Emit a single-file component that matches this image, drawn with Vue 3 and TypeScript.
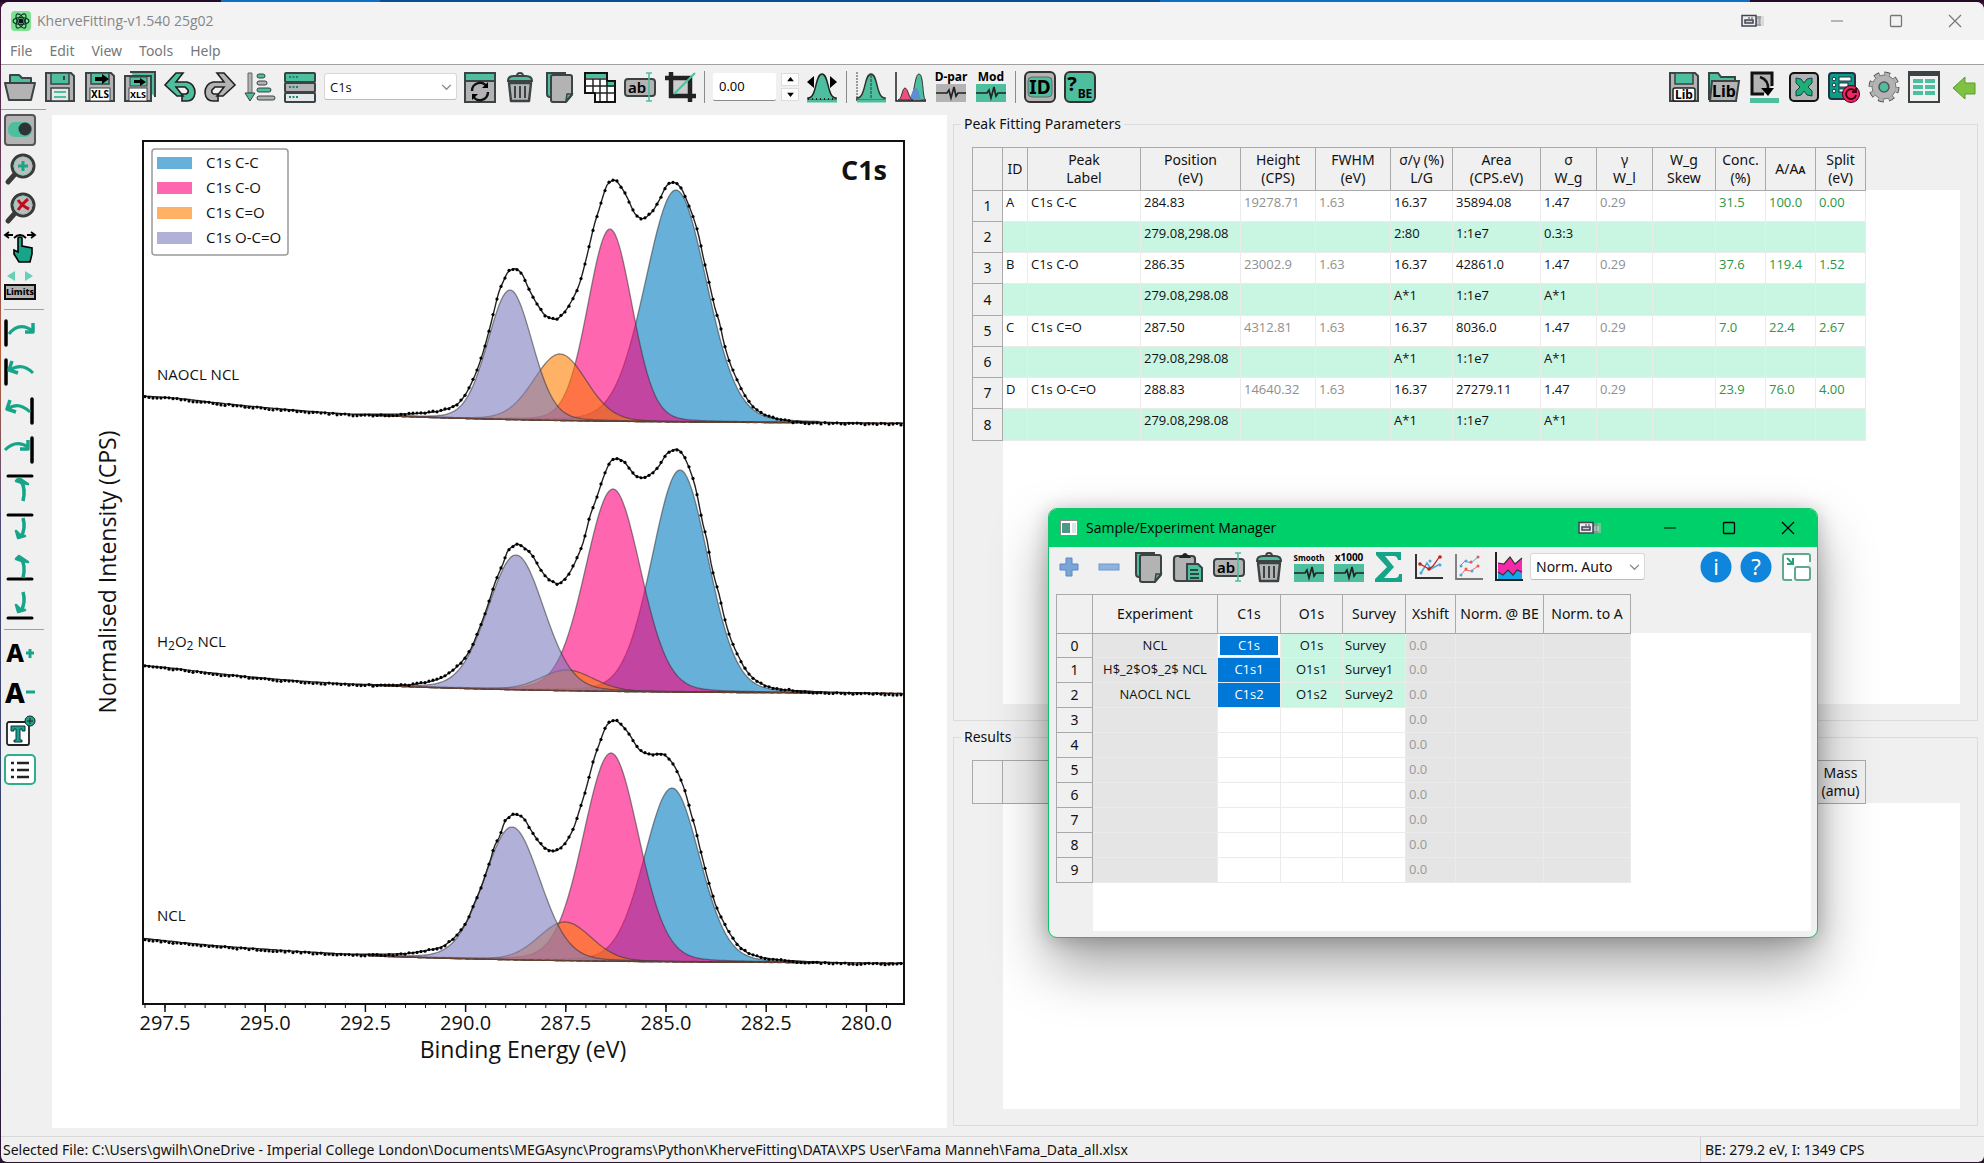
<script setup lang="ts">
import { ref } from 'vue'

type Pt = [number, number]

const menus = ['File', 'Edit', 'View', 'Tools', 'Help']
const coreLevel = ref('C1s')
const normMode = ref('Norm. Auto')
const shift = ref('0.00')

const G = '#4dbf9f'
const K = '#3b4345'
const S = '#b3b3b3'
const T = '#17a589'

const floppy = `<path d="M2 2h25l3 3v25H2z" fill="${S}" stroke="${K}" stroke-width="2"/><rect x="7" y="2" width="18" height="11" fill="${G}" stroke="${K}" stroke-width="1.5"/>`
const xls = `<rect x="6" y="17" width="20" height="13" fill="#fff" stroke="${K}"/><text x="16" y="27" font-size="10" font-weight="700" text-anchor="middle" font-family="Noto Sans,sans-serif">XLS</text>`
const blackArrow = '<path d="M11 6h7V3l7 5-7 5v-3h-7z" fill="#000"/>'
const pages = `<path d="M3 2h18v24H6q-3 0-3-3z" fill="${G}" stroke="${K}" stroke-width="2"/><path d="M9 4h17q2 0 2 2v18l-6 7H9q-2 0-2-2V6q0-2 2-2z" fill="${S}" stroke="${K}" stroke-width="2"/><path d="M28 23h-5l-1 7z" fill="${G}" stroke="${K}" stroke-width="1.5"/>`
const rename = `<rect x="1" y="8" width="30" height="17" rx="3" fill="${S}" stroke="${K}" stroke-width="2"/><text x="13" y="22" font-size="15" font-weight="600" text-anchor="middle" font-family="Noto Sans,sans-serif">ab</text><path d="M22 2h6M22 30h6M25 2v28" stroke="${G}" stroke-width="1.6" fill="none"/>`
const trash = `<path d="M5 12h22l-2 18H7z" fill="${S}" stroke="${K}" stroke-width="2.400" stroke-linejoin="round"/><path d="M11 15v12M16 15v12M21 15v12" stroke="${K}" stroke-width="2"/><path d="M4 10q0-5 6-5h12q6 0 6 5z" fill="${G}" stroke="${K}" stroke-width="2"/><path d="M13 5q0-3 3-3t3 3" fill="none" stroke="${K}" stroke-width="2"/>`
const bell = 'M2 27c9 0 7-24 14-24s5 24 14 24v2H2z'
const pulse = (label: string, fill: string, size: number) =>
  `<text x="16" y="10" font-size="${size}" font-weight="700" text-anchor="middle" font-family="Noto Sans,sans-serif">${label}</text><rect x="1" y="13" width="30" height="18" fill="${fill}"/><path d="M1 22h11l2-3 2 8 3-11 2 9 2-3h8" fill="none" stroke="#222" stroke-width="1.700"/>`
const lens = (mark: string) =>
  `<path d="M12 20l-8 9" stroke="#3a3a3a" stroke-width="5" stroke-linecap="round"/><circle cx="19" cy="13" r="11" fill="#bdbdbd" stroke="#3a3a3a" stroke-width="3"/><circle cx="19" cy="13" r="9" fill="none" stroke="#87c8b2" stroke-width="1"/>${mark}`
const sideArrow = (bar: number, tail: string, head: string) =>
  `<path d="M${bar} 4v24" stroke="#000" stroke-width="3.500" stroke-linecap="round"/><path d="${tail}" fill="none" stroke="${T}" stroke-width="3"/><path d="${head}" fill="none" stroke="${T}" stroke-width="3.500" stroke-linejoin="round"/>`
const upArrow = (bar: number, tail: string, head: string) =>
  `<path d="M4 ${bar}h24" stroke="#000" stroke-width="3" stroke-linecap="round"/><path d="${tail}" fill="none" stroke="${T}" stroke-width="3.500"/><path d="${head}" fill="${T}" stroke="${T}" stroke-width="2.500" stroke-linejoin="round"/>`
const roundBlue = (ch: string) =>
  `<circle cx="16" cy="16" r="15.500" fill="#0f86dc"/><text x="16" y="24" font-size="22" text-anchor="middle" fill="#fff" font-family="Noto Sans,sans-serif">${ch}</text>`

const icons: Record<string, string> = {
  open: `<path d="M6 12V4h9l3 3h9v6z" fill="${G}" stroke="${K}" stroke-width="2" stroke-linejoin="round"/><path d="M1 12h30l-4 17H5z" fill="${S}" stroke="${K}" stroke-width="2" stroke-linejoin="round"/>`,
  save: `${floppy}<rect x="7" y="17" width="18" height="13" fill="#e8e8e8" stroke="${K}" stroke-width="1.500"/><path d="M10 21h12M10 26h12" stroke="${G}" stroke-width="2"/><path d="M20 5v4" stroke="${K}" stroke-width="2"/>`,
  saveXls: `${floppy}${blackArrow}${xls}`,
  saveAll: `<path d="M6 1h25v25" fill="${G}" stroke="${K}" stroke-width="2"/><path d="M1 5h26v25H1z" fill="${S}" stroke="${K}" stroke-width="2"/><rect x="6" y="6" width="17" height="9" fill="${G}" stroke="${K}"/><path d="M10 9h6V7l6 4-6 4v-3h-6z"/><rect x="5" y="17" width="18" height="13" fill="#fff" stroke="${K}"/><text x="14" y="27" font-size="9" font-weight="700" text-anchor="middle" font-family="Noto Sans,sans-serif">XLS</text>`,
  undo: `<path d="M12 2h7l-7 9h11q8 2 8 11-1 8-8 8h-5v-7h4q3-1 2-4l-3-3H12l7 9h-6L1 14z" fill="${G}" stroke="#222" stroke-width="1.600"/>`,
  redo: `<path d="M20 2h-7l7 9H9q-8 2-8 11 1 8 8 8h5v-7h-4q-3-1-2-4l3-3h9l-7 9h6l12-11z" fill="${S}" stroke="#222" stroke-width="1.600"/>`,
  sort: `<path d="M4 2h4v20H4z" fill="${S}" stroke="#666"/><path d="M1 22h10l-5 8z" fill="${G}" stroke="${K}"/><rect x="13" y="3" width="8" height="4" rx="2" fill="${G}" stroke="${K}"/><rect x="13" y="10" width="10" height="4" rx="2" fill="${S}" stroke="${K}"/><rect x="13" y="17" width="14" height="4" rx="2" fill="${G}" stroke="${K}"/><rect x="13" y="25" width="18" height="4" rx="2" fill="${S}" stroke="${K}"/>`,
  rows: `<rect x="1" y="2" width="30" height="9" rx="1" fill="${G}" stroke="${K}" stroke-width="2"/><rect x="1" y="12" width="30" height="9" rx="1" fill="${S}" stroke="${K}" stroke-width="2"/><rect x="1" y="22" width="30" height="9" rx="1" fill="#e5e9ec" stroke="${K}" stroke-width="2"/><path d="M5 6h9M5 16h9M5 26h9" stroke="#178a72" stroke-width="2" stroke-dasharray="2 1.500"/>`,
  refresh: `<rect x="1" y="2" width="30" height="29" fill="${S}" stroke="${K}" stroke-width="2"/><rect x="2" y="3" width="28" height="6" fill="${G}"/><path d="M1 10h30" stroke="${K}" stroke-width="2"/><path d="M8 20a8 8 0 0 1 15-4M24 21a8 8 0 0 1-15 4" fill="none" stroke="#111" stroke-width="2.500"/><path d="M24 11v6h-6zM8 29v-6h6z"/>`,
  trash, pages, rename,
  grid: `<path d="M1 2h22v8h8v21H11V22H1z" fill="#fff" stroke="#111" stroke-width="2"/><path d="M2 3h20v4H2zM22 11h8v5h-8z" fill="${G}"/><path d="M1 8h22M1 15h30M9 8v14M16 8v22M23 10v20M11 22h20" stroke="#222" stroke-width="1.500"/>`,
  crop: `<rect x="9" y="8" width="16" height="16" fill="#ccc"/><path d="M1 7h25v24M7 1v24h25" fill="none" stroke="#222" stroke-width="4.500"/><path d="M10 23L31 2" stroke="${G}" stroke-width="2"/>`,
  shift: `<path d="${bell}" fill="${G}" stroke="#222" stroke-width="1.500"/><path d="M1 11l7-6v12zM31 11l-7-6v12z"/><path d="M1 30h30" stroke="${G}" stroke-width="3"/><path d="M2 28h28" stroke="#222" stroke-dasharray="1 3" stroke-width="2"/>`,
  peak: `<path d="M2 1v29h29" fill="none" stroke="#444" stroke-dasharray="2 1"/><path d="${bell}" fill="${G}" stroke="#333" stroke-width="1.500"/><path d="M16 4v24" stroke="#333" stroke-dasharray="3 1"/><path d="M2 30h29" stroke="${G}" stroke-width="3"/>`,
  peaks: `<path d="M13 29c7 0 6-26 11-26s3 26 7 26z" fill="${G}" stroke="#333"/><path d="M12 29c4 0 5-12 9-12s3 12 6 12z" fill="#5b8fd0"/><path d="M3 29c4 0 4-12 7-12s4 12 8 12z" fill="#ee4f7d" stroke="#333"/><path d="M1 1v29h30" fill="none" stroke="#222" stroke-width="1.500"/>`,
  dpar: pulse('D-par', S, 12),
  mod: pulse('Mod', G, 12),
  id: `<rect x="1" y="1" width="30" height="30" rx="5" fill="${S}" stroke="#333" stroke-width="2"/><rect x="4" y="6" width="24" height="20" rx="4" fill="${G}" stroke="#666"/><text x="16" y="23" font-size="19" font-weight="700" text-anchor="middle" font-family="Noto Sans,sans-serif">ID</text>`,
  be: `<rect x="1" y="1" width="30" height="30" rx="5" fill="${G}" stroke="#333" stroke-width="2"/><text x="8" y="20" font-size="20" font-weight="700" text-anchor="middle" font-family="Noto Sans,sans-serif">?</text><text x="21" y="27" font-size="12" font-weight="700" text-anchor="middle" font-family="Noto Sans,sans-serif">BE</text>`,
  saveLib: `${floppy}<rect x="5" y="17" width="22" height="13" rx="2" fill="#fff" stroke="#222" stroke-width="1.500"/><text x="16" y="28" font-size="12" font-weight="700" text-anchor="middle" font-family="Noto Sans,sans-serif">Lib</text>`,
  openLib: `<path d="M1 29V2h9l3 4h14v6" fill="${G}" stroke="${K}" stroke-width="2"/><path d="M4 10h27l-3 20H2z" fill="${S}" stroke="${K}" stroke-width="2"/><text x="16" y="26" font-size="16" font-weight="700" text-anchor="middle" font-family="Noto Sans,sans-serif">Lib</text>`,
  export: `<path d="M24 15V2H4v21h12" fill="${S}" stroke="#111" stroke-width="3"/><path d="M12 6q9 3 8 13" fill="none" stroke="#111" stroke-width="2.500"/><path d="M13 17h13l-6 8z"/><rect x="2" y="27" width="29" height="5" fill="${G}"/>`,
  excel: `<rect x="2" y="2" width="28" height="28" rx="4" fill="${S}" stroke="#111" stroke-width="2"/><path d="M8 7l5 1 3 4 3-4 5-1v5l-4 4 4 4v5l-5-1-3-4-3 4-5 1v-5l4-4-4-4z" fill="#1fae74" stroke="#145" stroke-width="1"/>`,
  form: `<rect x="1" y="2" width="26" height="26" rx="3" fill="#0b9d86" stroke="#234" stroke-width="2"/><g fill="#fff" stroke="#234"><circle cx="6" cy="8" r="1.800"/><circle cx="6" cy="14" r="1.800"/><circle cx="6" cy="20" r="1.800"/><rect x="11" y="6" width="12" height="4"/><rect x="11" y="12" width="9" height="4"/><rect x="11" y="18" width="7" height="3"/></g><circle cx="23" cy="23" r="8.500" fill="#f5216b" stroke="#401"/><path d="M27 20a5 5 0 1 0 1 4M28 17v4h-4" fill="none" stroke="#300" stroke-width="1.800"/>`,
  gear: `<circle cx="16" cy="16" r="13" fill="none" stroke="#555" stroke-width="5" stroke-dasharray="5.500 4.710"/><circle cx="16" cy="16" r="12" fill="${S}" stroke="#777"/><circle cx="16" cy="16" r="13" fill="none" stroke="${S}" stroke-width="3" stroke-dasharray="4.500 5.710" stroke-dashoffset="-.5"/><circle cx="16" cy="16" r="5" fill="${G}" stroke="#555" stroke-width="1.500"/>`,
  sheet: `<rect x="1" y="1" width="30" height="30" fill="#f1f1f1" stroke="${K}" stroke-width="2"/><path d="M0 3h32" stroke="${K}" stroke-width="4"/><g fill="${G}"><path d="M5 8h10v4H5zM17 8h10v4H17zM5 14h10v4H5zM17 14h10v4H17zM5 20h10v4H5zM17 20h10v4H17z"/></g>`,
  back: `<path d="M5 17L17 6v6h10v11H17v5z" fill="#7fc241" stroke="#5c9a2c"/>`,
  toggle: `<rect x="1" y="1" width="30" height="30" rx="3" fill="${S}" stroke="#555" stroke-width="2"/><rect x="4" y="8" width="24" height="15" rx="7" fill="${G}"/><circle cx="21" cy="15" r="6.500" fill="#2e3436"/>`,
  zoomIn: lens(`<path d="M19 8v10M14 13h10" stroke="${T}" stroke-width="3"/>`),
  zoomOut: lens('<path d="M14 8q4 6 11 9M24 7q-5 4-10 11" stroke="#c00d1e" stroke-width="3" fill="none"/>'),
  drag: `<path d="M1 4h8M31 4h-8M5 1L1 4l4 3M27 1l4 3-4 3M10 7q6-6 12 0" fill="none" stroke="#000" stroke-width="1.800"/><path d="M14 7q2-2 4 0v8l10 2v6l-2 8H15l-5-8v-4l4 2z" fill="${T}" stroke="#000" stroke-width="1.600"/>`,
  limits: `<path d="M3 6l8-5v10zM29 6l-8-5v10z" fill="#66d1b6"/><rect x="1" y="15" width="30" height="14" fill="${S}" stroke="#111" stroke-width="2"/><text x="16" y="25" font-size="9" font-weight="800" text-anchor="middle" font-family="Noto Sans,sans-serif">Limits</text>`,
  a1: sideArrow(2, 'M5 17Q15 4 29 14', 'M29 6v9h-8'),
  a2: sideArrow(2, 'M29 17Q18 6 6 14', 'M8 5l-3 9 9 3'),
  a3: sideArrow(28, 'M26 17Q14 6 4 14', 'M6 5l-3 9 9 3'),
  a4: sideArrow(28, 'M1 16Q12 5 24 13', 'M24 6v9h-8'),
  u1: upArrow(3, 'M19 28Q22 16 17 8', 'M12 8l3-3 9 6-6-1z'),
  u2: upArrow(3, 'M19 6Q22 16 17 25', 'M12 19l2 7 7-2-5-1z'),
  u3: upArrow(28, 'M19 27Q22 14 17 8', 'M12 8l3-3 9 6-6-1z'),
  u4: upArrow(28, 'M19 2Q22 12 17 21', 'M12 15l2 7 7-2-5-1z'),
  aPlus: `<text x="11" y="25" font-size="25" font-weight="800" text-anchor="middle" font-family="Noto Sans,sans-serif">A</text><path d="M26 12v9M22 16h8" stroke="${T}" stroke-width="3"/>`,
  aMinus: `<text x="11" y="27" font-size="28" font-weight="800" text-anchor="middle" font-family="Noto Sans,sans-serif">A</text><path d="M22 16h9" stroke="${T}" stroke-width="3"/>`,
  text: `<rect x="3" y="7" width="22" height="23" rx="2" fill="#fff" stroke="#222" stroke-width="1.800"/><path d="M7 11h14v5h-3v-2h-2v11h2v2h-8v-2h2V14h-2v2H7z" fill="${T}" stroke="#134" stroke-width="1"/><circle cx="26" cy="6" r="5" fill="${T}" stroke="#222"/><path d="M26 3v6M23 6h6" stroke="#222"/>`,
  list: `<rect x="1" y="1" width="30" height="29" rx="4" fill="#fff" stroke="#2fae8c" stroke-width="2"/><path d="M13 9h12M13 16h12M13 23h12M7 9h3M7 16h3M7 23h3" stroke="#222" stroke-width="2.400"/>`,
  plus: '<path d="M13 7h6v6h6v6h-6v6h-6v-6H7v-6h6z" fill="#7aa5d8" stroke="#5d86c4"/>',
  minus: '<rect x="6" y="13" width="20" height="6" fill="#8fb2dd" stroke="#6f97cf"/>',
  paste: `<rect x="1" y="5" width="21" height="25" rx="3" fill="${S}" stroke="${K}" stroke-width="2.200"/><path d="M6 7q0-2 3-3 3-4 6 0 3 1 3 3z" fill="#222"/><path d="M14 13h11l4 4v13H14z" fill="${G}" stroke="${K}" stroke-width="2"/><path d="M17 19h8M17 23h9M17 27h9" stroke="#222" stroke-width="1.500"/>`,
  smooth: pulse('Smooth', G, 8),
  x1000: pulse('x1000', G, 10),
  sigma: `<path d="M3 1h25v8h-3q-1-4-4-4h-9l9 11-10 11h11q4 0 4-4h3v8H2v-3l12-12L3 4z" fill="${T}"/>`,
  trend: '<path d="M3 3v24h27" fill="none" stroke="#333" stroke-width="2"/><path d="M8 22l6-10 4 6 9-5" fill="none" stroke="#4aa7dc" stroke-width="1.500"/><g fill="#4aa7dc"><circle cx="8" cy="22" r="1.500"/><circle cx="17" cy="10" r="1.500"/><circle cx="27" cy="14" r="1.500"/></g><path d="M7 13l9 5 4-3 7-10" fill="none" stroke="#b22" stroke-width="1.300"/><g fill="#b22"><circle cx="7" cy="13" r="1.800"/><circle cx="16" cy="18" r="1.800"/><circle cx="27" cy="6" r="1.800"/></g>',
  scatter: '<path d="M3 3v25h27" fill="none" stroke="#777" stroke-width="1.800"/><path d="M7 15l5-5 6 2 7-6" fill="none" stroke="#4aa7dc"/><path d="M7 25l5-6 6 1 7-5" fill="none" stroke="#e66"/><g fill="#4aa7dc"><circle cx="8" cy="15" r="1.500"/><circle cx="13" cy="10" r="1.500"/><circle cx="8" cy="24" r="1.500"/><circle cx="19" cy="20" r="1.500"/></g><g fill="#e55"><circle cx="18" cy="11" r="1.500"/><circle cx="25" cy="6" r="1.500"/><circle cx="13" cy="18" r="1.500"/><circle cx="25" cy="15" r="1.500"/></g>',
  area: '<path d="M5 28V12l6 1 6-7 5 7 7-6v21z" fill="#f62aa9"/><path d="M5 28v-7l5 3 5-5 5 5 4-5 5 4v5z" fill="#12a6ea"/><path d="M5 21l5 3 5-5 5 5 4-5 5 2M5 12l6 1 6-7 5 7 7-6" fill="none" stroke="#333" stroke-width="1.200"/><path d="M3 1v28h27" fill="none" stroke="#222" stroke-width="2"/>',
  info: roundBlue('i'),
  help: roundBlue('?'),
  shrink: '<path d="M30 11V5q0-2-2-2H5Q3 3 3 5v22q0 2 2 2h7" fill="#fff" stroke="#5fa98d" stroke-width="2"/><rect x="15" y="16" width="15" height="13" rx="2" fill="#fff" stroke="#5fa98d" stroke-width="2"/><path d="M7 7l6 6M13 7v6H7" fill="none" stroke="#2b9c78" stroke-width="2"/>',
  min: '<path d="M10 16h12" stroke="currentColor"/>',
  max: '<rect x="10.500" y="10.500" width="11" height="11" rx="1" fill="none" stroke="currentColor" stroke-width="1.300"/>',
  close: '<path d="M10 10l12 12M22 10L10 22" stroke="currentColor" stroke-width="1.200"/>',
  panes: '<path d="M22 11h6v10h-6z" fill="#c4c4c8" opacity=".5"/><path d="M20 11h5v10h-5z" fill="#8a8a94" opacity=".7"/><path d="M22 14v5M25 14v5" stroke="#ddd"/><rect x="6" y="10.500" width="14" height="10.500" fill="#eee" stroke="#445" stroke-width="1.500"/><rect x="9" y="15" width="8" height="3" fill="#cfd3d8" stroke="#445" stroke-width="1.500"/><path d="M13 12v2M16 12v2" stroke="#445"/>',
}

const bar1 = ['open', 'save', 'saveXls', 'saveAll', 'undo', 'redo', 'sort', 'rows']
const bar2 = ['refresh', 'trash', 'pages', 'grid', 'rename', 'crop']
const bar3 = ['peak', 'peaks', 'dpar', 'mod']
const bar4 = ['id', 'be']
const barRight = ['saveLib', 'openLib', 'export', 'excel', 'form', 'gear', 'sheet', 'back']
const side = [
  ['toggle', 'zoomIn', 'zoomOut', 'drag', 'limits'],
  ['a1', 'a2', 'a3', 'a4', 'u1', 'u2', 'u3', 'u4'],
  ['aPlus', 'aMinus', 'text', 'list'],
]
const dialogBar = ['plus', 'minus', 'pages', 'paste', 'rename', 'trash', 'smooth', 'x1000', 'sigma', 'trend', 'scatter', 'area']
const dialogRight = ['info', 'help', 'shrink']

// Peak fitting table
const peakCols = [
  { w: 25, t: ['ID'] }, { w: 113, t: ['Peak', 'Label'] }, { w: 100, t: ['Position', '(eV)'] },
  { w: 75, t: ['Height', '(CPS)'] }, { w: 75, t: ['FWHM', '(eV)'] }, { w: 62, t: ['σ/γ (%)', 'L/G'] },
  { w: 88, t: ['Area', '(CPS.eV)'] }, { w: 56, t: ['σ', 'W_g'] }, { w: 56, t: ['γ', 'W_l'] },
  { w: 63, t: ['W_g', 'Skew'] }, { w: 50, t: ['Conc.', '(%)'] }, { w: 50, t: ['A/Aᴀ'] }, { w: 50, t: ['Split', '(eV)'] },
]
const peakRows = [
  ['A', 'C1s C-C', '284.83', '19278.71', '1.63', '16.37', '35894.08', '1.47', '0.29', '', '31.5', '100.0', '0.00'],
  ['', '', '279.08,298.08', '', '', '2:80', '1:1e7', '0.3:3', '', '', '', '', ''],
  ['B', 'C1s C-O', '286.35', '23002.9', '1.63', '16.37', '42861.0', '1.47', '0.29', '', '37.6', '119.4', '1.52'],
  ['', '', '279.08,298.08', '', '', 'A*1', '1:1e7', 'A*1', '', '', '', '', ''],
  ['C', 'C1s C=O', '287.50', '4312.81', '1.63', '16.37', '8036.0', '1.47', '0.29', '', '7.0', '22.4', '2.67'],
  ['', '', '279.08,298.08', '', '', 'A*1', '1:1e7', 'A*1', '', '', '', '', ''],
  ['D', 'C1s O-C=O', '288.83', '14640.32', '1.63', '16.37', '27279.11', '1.47', '0.29', '', '23.9', '76.0', '4.00'],
  ['', '', '279.08,298.08', '', '', 'A*1', '1:1e7', 'A*1', '', '', '', '', ''],
]
const tone = (c: number) => (c >= 10 ? 'green' : c === 3 || c === 4 || c === 8 ? 'grey' : '')

const expCols = [
  { w: 125, t: 'Experiment' }, { w: 63, t: 'C1s' }, { w: 62, t: 'O1s' }, { w: 63, t: 'Survey' },
  { w: 50, t: 'Xshift' }, { w: 88, t: 'Norm. @ BE' }, { w: 87, t: 'Norm. to A' },
]
const expRows = Array.from({ length: 10 }, (_, i) => {
  const names = ['NCL', 'H$_2$O$_2$ NCL', 'NAOCL NCL']
  const n = i === 0 ? '' : String(i)
  return i < 3 ? [names[i], 'C1s' + n, 'O1s' + n, 'Survey' + n, '0.0', '', ''] : ['', '', '', '', '0.0', '', '']
})

const chX = (c: number) => 90 + c / 1.912
const env: { top: number; base: [number, number]; pts: number[]; peaks: [number, number, number][] }[] = [
  {
    top: 120, base: [396, 423.5],
    pts: [101, 828, 160, 834, 240, 848, 330, 862, 430, 875, 520, 883, 600, 882, 660, 875, 700, 855, 715, 830, 735, 770, 750, 705, 765, 620, 773, 570, 781, 520, 790, 485, 800, 455, 812, 446, 824, 458, 840, 510, 858, 560, 872, 588, 890, 598, 905, 580, 920, 545, 935, 495, 949, 415, 965, 310, 974, 265, 981, 228, 990, 192, 1003, 180, 1015, 200, 1027, 232, 1043, 283, 1056, 296, 1072, 280, 1088, 242, 1104, 195, 1116, 187, 1128, 200, 1142, 245, 1158, 314, 1165, 355, 1172, 408, 1180, 462, 1187, 510, 1195, 565, 1204, 610, 1210, 655, 1217, 697, 1225, 735, 1233, 765, 1242, 795, 1250, 820, 1265, 855, 1285, 880, 1310, 895, 1350, 904, 1430, 908, 1556, 910],
    peaks: [[676, 190, 72], [610, 229, 52], [560, 354, 62], [510, 290, 52]],
  },
  {
    top: 420, base: [665.3, 693.7],
    pts: [101, 736, 160, 745, 240, 760, 330, 774, 430, 786, 520, 793, 600, 795, 640, 788, 670, 775, 690, 755, 705, 735, 727, 690, 742, 635, 758, 568, 766, 530, 774, 490, 783, 455, 790, 430, 800, 390, 818, 373, 830, 383, 845, 405, 858, 440, 872, 470, 882, 483, 895, 491, 907, 478, 920, 450, 935, 400, 943, 367, 950, 325, 957, 283, 966, 245, 974, 208, 981, 175, 990, 140, 997, 122, 1008, 116, 1020, 124, 1030, 142, 1043, 167, 1057, 173, 1072, 162, 1088, 138, 1104, 100, 1122, 88, 1133, 103, 1142, 130, 1150, 163, 1158, 205, 1165, 258, 1172, 313, 1180, 362, 1187, 427, 1195, 480, 1204, 530, 1211, 580, 1218, 622, 1226, 660, 1234, 690, 1242, 715, 1250, 740, 1265, 770, 1285, 792, 1310, 805, 1350, 812, 1430, 817, 1556, 821],
    peaks: [[680, 470, 66], [613, 489, 65], [567, 670, 62], [516, 555, 66]],
  },
  {
    top: 700, base: [938.3, 963.3],
    pts: [101, 715, 180, 728, 240, 737, 330, 747, 430, 757, 520, 763, 600, 761, 640, 752, 670, 742, 690, 722, 706, 697, 720, 665, 734, 613, 750, 553, 758, 515, 766, 478, 773, 440, 783, 410, 795, 360, 812, 343, 827, 352, 843, 390, 858, 425, 873, 447, 888, 453, 904, 437, 920, 400, 928, 370, 935, 335, 943, 295, 950, 257, 957, 215, 965, 170, 973, 135, 981, 100, 990, 72, 1003, 61, 1018, 78, 1030, 100, 1050, 148, 1062, 160, 1078, 163, 1092, 161, 1104, 172, 1119, 203, 1134, 257, 1142, 298, 1149, 340, 1158, 388, 1165, 437, 1173, 487, 1180, 530, 1188, 573, 1195, 610, 1203, 640, 1211, 665, 1218, 687, 1226, 707, 1240, 737, 1260, 760, 1290, 774, 1340, 782, 1430, 788, 1556, 790],
    peaks: [[672, 788, 65], [611, 753, 65], [565, 922, 62], [512, 827, 66]],
  },
]
const fills = ['#027bc0', '#ff007b', '#ff7d00', '#7d7bbe']
const legend = ['C1s C-C', 'C1s C-O', 'C1s C=O', 'C1s O-C=O']

const baseline = (b: [number, number], x: number) => b[1] - (b[1] - b[0]) * Math.exp(-(x - 143) / 190)
const toPath = (p: Pt[]) => 'M' + p.map(([x, y]) => `${x.toFixed(1)} ${y.toFixed(1)}`).join('L')
const noise = (k: number) => {
  const v = Math.sin(k * 127.1 + 3.7) * 43758.5453
  return (v - Math.floor(v)) * 2 - 1
}

// Monotone cubic interpolation through the samples
function sampler(p: Pt[]) {
  const n = p.length
  const d = p.slice(1).map((q, i) => (q[1] - p[i][1]) / (q[0] - p[i][0]))
  const m = p.map((_, i) => {
    if (i === 0) return d[0]
    if (i === n - 1) return d[n - 2]
    return d[i - 1] * d[i] <= 0 ? 0 : (2 * d[i - 1] * d[i]) / (d[i - 1] + d[i])
  })
  return (x: number) => {
    let i = 0
    while (i < n - 2 && x > p[i + 1][0]) i++
    const h = p[i + 1][0] - p[i][0]
    const t = (x - p[i][0]) / h
    return (2 * t ** 3 - 3 * t ** 2 + 1) * p[i][1] + (t ** 3 - 2 * t ** 2 + t) * h * m[i]
      + (3 * t ** 2 - 2 * t ** 3) * p[i + 1][1] + (t ** 3 - t ** 2) * h * m[i + 1]
  }
}

const spectra = env.map((s, si) => {
  const pts: Pt[] = []
  for (let i = 0; i < s.pts.length; i += 2) pts.push([chX(s.pts[i]), s.top + s.pts[i + 1] / 3])
  const f = sampler(pts)
  const line: Pt[] = []
  const base: Pt[] = []
  for (let x = 143; x <= 904; x += 2) {
    line.push([x, f(x)])
    base.push([x, baseline(s.base, x)])
  }
  const dots: Pt[] = []
  for (let k = 0; k < 190; k++) {
    const x = 145 + k * 4
    const flat = x < 400 || x > 790
    dots.push([x, f(x) + noise(k + si * 200) * 0.8 + (flat ? 1 : 0)])
  }
  const peaks = s.peaks.map(([c, y, w]) => {
    const h = baseline(s.base, c) - y
    const edge = base.map(([x, b]): Pt => {
      const u = (x - c) / w
      return [x, b - h * (0.9 * Math.exp(-2.7726 * u * u) + 0.1 / (1 + 4 * u * u))]
    }).filter(([x]) => x > 370 && x < 820)
    const floor = base.filter(([x]) => x > 370 && x < 820).reverse()
    return toPath(edge.concat(floor)) + 'Z'
  })
  return { line: toPath(line), base: toPath(base.filter(([x]) => x > 360)), dots, peaks }
})
const majors = Array.from({ length: 8 }, (_, i) => ({ x: 165 + i * 100.2, t: (297.5 - i * 2.5).toFixed(1) }))
const minors = Array.from({ length: 38 }, (_, i) => 145 + i * 20.04)
</script>

<template>
  <div class="desktop">
    <div class="wallpaper"></div>
    <div class="window">
      <header class="titlebar">
        <svg class="logo" viewBox="0 0 20 20" aria-hidden="true">
          <rect width="20" height="20" rx="4" fill="#7be28f" />
          <g fill="none" stroke="#12332a" stroke-width="1.2">
            <ellipse cx="10" cy="10" rx="8" ry="3.500" />
            <ellipse cx="10" cy="10" rx="8" ry="3.500" transform="rotate(60 10 10)" />
            <ellipse cx="10" cy="10" rx="8" ry="3.500" transform="rotate(120 10 10)" />
          </g>
          <circle cx="10" cy="10" r="2.500" fill="#111" />
        </svg>
        <h1>KherveFitting-v1.540 25g02</h1>
        <svg class="ic panes" viewBox="0 0 32 32" v-html="icons.panes"></svg>
        <button v-for="b in ['min', 'max', 'close']" :key="b" class="winbtn" :aria-label="b">
          <svg class="ic" viewBox="0 0 32 32" v-html="icons[b]"></svg>
        </button>
      </header>
      <nav class="menubar"><button v-for="m in menus" :key="m">{{ m }}</button></nav>

      <div class="toolbar">
        <button v-for="n in bar1" :key="n" class="tool" :aria-label="n"><svg class="ic" viewBox="0 0 32 32" v-html="icons[n]"></svg></button>
        <span class="drop">
          <select v-model="coreLevel" aria-label="Core level"><option>C1s</option><option>O1s</option><option>Survey</option></select>
          <svg viewBox="0 0 12 8"><path d="M1 1l5 5 5-5" /></svg>
        </span>
        <button v-for="n in bar2" :key="n" class="tool" :aria-label="n"><svg class="ic" viewBox="0 0 32 32" v-html="icons[n]"></svg></button>
        <i class="vsep"></i>
        <input v-model="shift" class="shift" aria-label="BE shift" />
        <span class="spin">
          <button aria-label="Increase"><svg viewBox="0 0 8 6"><path d="M0 5l4-5 4 5z" /></svg></button>
          <button aria-label="Decrease"><svg viewBox="0 0 8 6"><path d="M0 1l4 5 4-5z" /></svg></button>
        </span>
        <button class="tool" aria-label="shift"><svg class="ic" viewBox="0 0 32 32" v-html="icons.shift"></svg></button>
        <i class="vsep"></i>
        <button v-for="n in bar3" :key="n" class="tool" :aria-label="n"><svg class="ic" viewBox="0 0 32 32" v-html="icons[n]"></svg></button>
        <i class="vsep"></i>
        <button v-for="n in bar4" :key="n" class="tool" :aria-label="n"><svg class="ic" viewBox="0 0 32 32" v-html="icons[n]"></svg></button>
        <span class="grow"></span>
        <button v-for="n in barRight" :key="n" class="tool" :aria-label="n"><svg class="ic" viewBox="0 0 32 32" v-html="icons[n]"></svg></button>
      </div>

      <main class="body">
        <aside class="side">
          <template v-for="(g, gi) in side" :key="gi">
            <i v-if="gi" class="hsep"></i>
            <button v-for="n in g" :key="n" class="tool" :aria-label="n"><svg class="ic" viewBox="0 0 32 32" v-html="icons[n]"></svg></button>
          </template>
        </aside>

        <section class="plot">
          <svg viewBox="52 115 895 1013" class="chart">
            <g v-for="(s, i) in spectra" :key="i">
              <path v-for="(p, j) in s.peaks" :key="j" :d="p" :fill="fills[j]" fill-opacity="0.6" stroke="#333" stroke-opacity="0.55" stroke-width="1.3" />
              <path :d="s.base" fill="none" stroke="#7a3c1a" stroke-width="1.500" stroke-dasharray="5 3" />
              <path :d="s.line" fill="none" stroke="#222" stroke-width="1.400" />
              <circle v-for="(d, k) in s.dots" :key="k" :cx="d[0]" :cy="d[1]" r="1.600" />
            </g>
            <rect x="143" y="141" width="761" height="863" fill="none" stroke="#111" stroke-width="2" />
            <path v-for="m in majors" :key="m.t" :d="`M${m.x} 1004v8`" stroke="#111" stroke-width="1.500" />
            <path v-for="m in minors" :key="m" :d="`M${m} 1004v4`" stroke="#111" />
            <text v-for="m in majors" :key="m.t" :x="m.x" y="1030" class="tick">{{ m.t }}</text>
            <text x="523" y="1058" class="axis">Binding Energy (eV)</text>
            <text transform="translate(116 572) rotate(-90)" class="axis">Normalised Intensity (CPS)</text>
            <rect x="152" y="149" width="136" height="106" rx="3" fill="#fff" stroke="#999" stroke-width="1.500" />
            <g v-for="(l, i) in legend" :key="l">
              <rect x="157" :y="157 + i * 25" width="35" height="12" :fill="fills[i]" fill-opacity="0.6" />
              <text x="206" :y="168 + i * 25" class="note">{{ l }}</text>
            </g>
            <text x="887" y="180" class="core">C1s</text>
            <text x="157" y="380" class="note">NAOCL NCL</text>
            <text x="157" y="647" class="note">H<tspan dy="3" font-size="12">2</tspan><tspan dy="-3">O</tspan><tspan dy="3" font-size="12">2</tspan><tspan dy="-3"> NCL</tspan></text>
            <text x="157" y="921" class="note">NCL</text>
          </svg>
        </section>

        <section class="panels">
          <fieldset class="fit">
            <legend>Peak Fitting Parameters</legend>
            <div class="gridbox">
              <table class="data peaks">
                <colgroup><col style="width: 31px" /><col v-for="(c, i) in peakCols" :key="i" :style="{ width: c.w + 'px' }" /></colgroup>
                <thead><tr><th></th><th v-for="(c, i) in peakCols" :key="i"><div v-for="t in c.t" :key="t">{{ t }}</div></th></tr></thead>
                <tbody>
                  <tr v-for="(r, i) in peakRows" :key="i" :class="{ alt: i % 2 }">
                    <th scope="row">{{ i + 1 }}</th>
                    <td v-for="(c, j) in r" :key="j" :class="tone(j)">{{ c }}</td>
                  </tr>
                </tbody>
              </table>
            </div>
          </fieldset>
          <fieldset class="results">
            <legend>Results</legend>
            <div class="gridbox">
              <table class="data peaks">
                <colgroup><col style="width: 31px" /><col style="width: 813px" /><col style="width: 50px" /></colgroup>
                <thead><tr><th></th><th></th><th><div>Mass</div><div>(amu)</div></th></tr></thead>
              </table>
            </div>
          </fieldset>
        </section>
      </main>

      <footer class="status">
        <span class="path">Selected File: C:\Users\gwilh\OneDrive - Imperial College London\Documents\MEGAsync\Programs\Python\KherveFitting\DATA\XPS User\Fama Manneh\Fama_Data_all.xlsx</span>
        <span class="cursor">BE: 279.2 eV, I: 1349 CPS</span>
      </footer>
    </div>

    <section class="dialog" role="dialog" aria-label="Sample/Experiment Manager">
      <header class="dialog-title">
        <svg class="app" viewBox="0 0 18 16" aria-hidden="true"><rect x=".5" y=".5" width="17" height="15" fill="#fff" stroke="#888" /><rect x="2" y="3" width="8" height="10" fill="#4b9a86" /><rect x="12" y="3" width="4" height="10" fill="#dce6ea" /></svg>
        <h2>Sample/Experiment Manager</h2>
        <svg class="ic panes" viewBox="0 0 32 32" v-html="icons.panes"></svg>
        <button v-for="b in ['min', 'max', 'close']" :key="b" class="winbtn" :aria-label="b">
          <svg class="ic" viewBox="0 0 32 32" v-html="icons[b]"></svg>
        </button>
      </header>
      <div class="dialog-bar">
        <button v-for="n in dialogBar" :key="n" class="tool" :aria-label="n"><svg class="ic" viewBox="0 0 32 32" v-html="icons[n]"></svg></button>
        <span class="drop norm">
          <select v-model="normMode" aria-label="Normalisation"><option>Norm. Auto</option><option>Norm. @ BE</option></select>
          <svg viewBox="0 0 12 8"><path d="M1 1l5 5 5-5" /></svg>
        </span>
        <span class="grow"></span>
        <button v-for="n in dialogRight" :key="n" class="tool" :aria-label="n"><svg class="ic" viewBox="0 0 32 32" v-html="icons[n]"></svg></button>
      </div>
      <div class="gridbox exp">
        <table class="data experiments">
          <colgroup><col style="width: 37px" /><col v-for="(c, i) in expCols" :key="i" :style="{ width: c.w + 'px' }" /></colgroup>
          <thead><tr><th></th><th v-for="c in expCols" :key="c.t">{{ c.t }}</th></tr></thead>
          <tbody>
            <tr v-for="(r, i) in expRows" :key="i" :class="{ filled: i < 3, first: i === 0 }">
              <th scope="row">{{ i }}</th>
              <td v-for="(c, j) in r" :key="j">{{ c }}</td>
            </tr>
          </tbody>
        </table>
      </div>
    </section>
  </div>
</template>

<style>
body { margin: 0; background: #2a0f2e; }
</style>

<style scoped>
.desktop { position: relative; height: 100vh; overflow: hidden; display: flex; flex-direction: column; font: 13px/18px "Open Sans", "Noto Sans", sans-serif; color: #111; background: linear-gradient(#3a1238, #7c4a66 20%, #c06038 30%, #4a4a78 45%, #34406c 75%, #2a1430); padding: 0 0 1px 1px; box-sizing: border-box; }
.wallpaper { flex: none; height: 2px; margin-left: -1px; background: linear-gradient(90deg, #240a26 221px, #0f6fc6 221px, #0f6fc6 380px, #0a4f94 380px, #0a4f94 1160px, #0f6fc6 1160px, #0f6fc6 1750px, #240a26 1750px); }
.window { flex: 1; min-height: 0; display: flex; flex-direction: column; background: #f0f0f0; border-radius: 8px 8px 6px 6px; overflow: hidden; }
button { border: 0; background: none; padding: 0; margin: 0; font: inherit; color: inherit; }
.ic { display: block; width: 32px; height: 32px; overflow: visible; }
.grow { flex: 1; }

.titlebar { flex: none; height: 38px; background: #f3f3f3; display: flex; align-items: center; color: #777; }
.logo { width: 20px; height: 20px; margin: 0 6px 0 10px; }
h1 { flex: 1; margin: 0; font: 400 14px/20px "Open Sans", sans-serif; color: #868686; }
.panes { margin-right: 39px; }
.winbtn { width: 59px; height: 38px; display: grid; place-items: center; }
.menubar { flex: none; height: 25px; background: #fff; display: flex; gap: 17px; padding: 0 0 2px 9px; color: #777; border-bottom: 1px solid #a0a0a0; box-sizing: border-box; font: 14px/20px "Noto Sans", sans-serif; }

.toolbar { flex: none; height: 50px; padding: 5px 4px 12px 3px; box-sizing: border-box; display: flex; align-items: center; gap: 8px; }
.tool { flex: none; width: 32px; height: 32px; }
.vsep { width: 1px; height: 32px; background: #8a8a8a; }
.drop { position: relative; width: 133px; margin: 0 -1px 0 0; }
.drop select { appearance: none; width: 100%; height: 27px; box-sizing: border-box; border: 1px solid #d8d8d8; border-bottom-color: #bcbcbc; border-radius: 3px; background: #fff; font: inherit; color: #111; padding: 0 5px; display: block; }
.drop svg { position: absolute; right: 5px; top: 11px; width: 11px; height: 7px; fill: none; stroke: #888; stroke-width: 1.500; pointer-events: none; }
.shift { width: 63px; height: 28px; box-sizing: border-box; border: 0; border-bottom: 1px solid #8a8a8a; background: #fff; font: inherit; padding: 0 6px; border-radius: 2px; }
.spin { display: flex; flex-direction: column; gap: 2px; margin: 0 -1px 0 -3px; }
.spin button { width: 18px; height: 13px; background: #fdfdfd; border: 1px solid #ddd; box-sizing: border-box; display: grid; place-items: center; }
.spin svg { width: 7px; height: 5px; }

.body { flex: 1; min-height: 0; display: grid; grid-template-columns: 51px minmax(0, 895fr) minmax(0, 1037fr); }
.side { display: flex; flex-direction: column; gap: 7px; padding: 5px 0 0 3px; margin-top: -6px; background: linear-gradient(#a0a0a0, #a0a0a0) 0 0 / 45px 1px no-repeat; }
.hsep { height: 1px; width: 40px; background: #a0a0a0; }
.plot { background: #fff; min-height: 0; }
.chart { display: block; width: 100%; height: 100%; }
.chart text { font-family: "Open Sans", sans-serif; fill: #111; }
.chart .tick { font-size: 20px; text-anchor: middle; }
.chart .axis { font-size: 23px; text-anchor: middle; }
.chart .note { font-size: 15px; }
.chart .core { font-size: 27px; font-weight: 700; text-anchor: end; }

.panels { display: grid; grid-template-rows: minmax(0, 606fr) minmax(0, 398fr); gap: 7px; padding: 0 6px 2px 6px; min-width: 0; }
fieldset { min-width: 0; margin: 0; border: 1px solid #dcdcdc; padding: 14px 17px 16px 18px; display: flex; flex-direction: column; }
legend { padding: 0 3px; margin-left: -11px; font: 14px/18px "Noto Sans", sans-serif; }
.gridbox { flex: 1; min-height: 0; overflow: hidden; background: linear-gradient(#fff, #fff) 31px 43px no-repeat; }
.data { border-collapse: separate; border-spacing: 0; table-layout: fixed; width: 0; }
.data th { font: 14px/18px "Noto Sans", sans-serif; padding: 0; text-align: center; background: #f0f0f0; border-right: 1px solid #a9a9a9; border-bottom: 1px solid #a9a9a9; white-space: nowrap; }
.data thead th { border-top: 1px solid #a9a9a9; }
.data th:first-child { border-left: 1px solid #a9a9a9; }
.data td { padding: 2px 0 0 3px; vertical-align: top; white-space: nowrap; border-right: 1px solid #ebebeb; border-bottom: 1px solid #ebebeb; background: #fff; }
.peaks thead tr { height: 44px; }
.peaks tbody tr { height: 31px; }
.peaks tbody tr:nth-child(4n) { height: 32px; }
.alt td { background: #c9f5e3; }
.data .grey { color: #8f8f8f; }
.data .green { color: #2a9648; }

.status { flex: none; height: 26px; margin-top: 8px; border-top: 1px solid #d9d9d9; box-sizing: border-box; display: flex; font: 14px/26px "Noto Sans", sans-serif; white-space: nowrap; padding-left: 2px; }
.path { flex: 1; min-width: 0; overflow: hidden; }
.cursor { width: 279px; border-left: 1px solid #d0d0d0; padding-left: 4px; }

.dialog { position: absolute; right: 166px; top: 508px; width: 770px; height: 430px; box-sizing: border-box; display: flex; flex-direction: column; background: #f0f0f0; border: 1px solid #14c46c; border-radius: 9px; overflow: hidden; box-shadow: 0 28px 56px rgba(0, 0, 0, 0.36), 0 2px 20px rgba(0, 0, 0, 0.22); }
.dialog-title { flex: none; height: 38px; background: #00d069; display: flex; align-items: center; color: #000; }
.app { width: 18px; height: 16px; margin: 0 8px 0 11px; }
h2 { flex: 1; margin: 0; font: 400 14px/20px "Open Sans", sans-serif; }
.dialog-title .panes { margin-right: 35px; }
.dialog-bar { flex: none; height: 47px; padding: 4px 5px 0 4px; box-sizing: border-box; display: flex; align-items: flex-start; gap: 8px; }
.dialog-bar .drop { width: 115px; margin: 2px 0 0 -3px; font: 14px/20px "Noto Sans", sans-serif; }
.exp { margin: 0 6px 6px 7px; background-position: 37px 39px; }
.experiments thead tr { height: 40px; }
.experiments tbody tr { height: 25px; }
.experiments tbody tr.first { height: 24px; }
.experiments td { text-align: center; padding: 1px 0 0; line-height: 20px; }
.experiments td:nth-child(2) { background: #e5e5e5; }
.experiments td:nth-child(n + 6) { background: #e5e5e5; color: #999; text-align: left; padding-left: 3px; }
.experiments td:nth-child(5) { text-align: left; padding-left: 2px; }
.experiments .filled td:nth-child(3) { background: #0078d7; color: #fff; }
.experiments .first td:nth-child(3) { box-shadow: inset 0 0 0 2px #fff; }
.experiments .filled td:nth-child(4), .experiments .filled td:nth-child(5) { background: #c9f5e3; }
</style>
